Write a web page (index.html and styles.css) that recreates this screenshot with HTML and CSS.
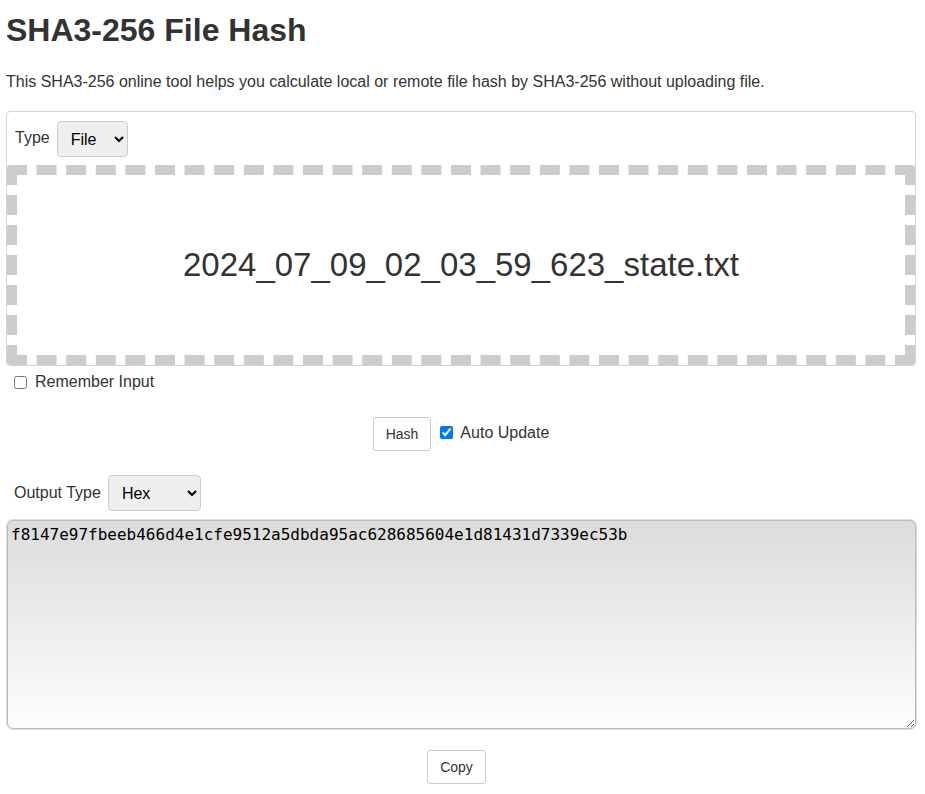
FILE: index.html
```html
<!DOCTYPE html>
<html>
<head>
<meta charset="utf-8">
<link rel="stylesheet" href="styles.css">
</head>
<body>
<div class="page">
  <h1 class="title">SHA3-256 File Hash</h1>
  <p class="desc">This SHA3-256 online tool helps you calculate local or remote file hash by SHA3-256 without uploading file.</p>
  <div class="panel">
    <div class="type-row">
      <label class="lbl">Type</label>
      <select class="sel sel-file"><option>File</option></select>
    </div>
    <div class="drop">2024_07_09_02_03_59_623_state.txt</div>
  </div>
  <div class="remember">
    <input type="checkbox" class="cb"><span>Remember Input</span>
  </div>
  <div class="actions">
    <button class="btn">Hash</button>
    <input type="checkbox" class="cb cb-auto" checked><span>Auto Update</span>
  </div>
  <div class="out-row">
    <label class="lbl">Output Type</label>
    <select class="sel sel-hex"><option>Hex</option></select>
  </div>
  <textarea class="output">f8147e97fbeeb466d4e1cfe9512a5dbda95ac628685604e1d81431d7339ec53b</textarea>
  <div class="copy-row">
    <button class="btn">Copy</button>
  </div>
</div>
</body>
</html>
```
FILE: styles.css
```css
html, body {
  margin: 0;
  padding: 0;
  background: #fff;
}
body {
  font-family: "Liberation Sans", Arial, sans-serif;
  color: #333;
  font-size: 16px;
}
.page {
  width: 910px;
  padding: 0 0 0 6px;
}
.title {
  font-size: 32px;
  font-weight: bold;
  margin: 0;
  padding-top: 11px;
  line-height: 38px;
}
.desc {
  margin: 23px 0 0 0;
  line-height: 20px;
}
.panel {
  margin-top: 19px;
  border: 1px solid #d3d3d3;
  border-radius: 4px;
  overflow: hidden;
}
.type-row {
  display: flex;
  align-items: center;
  gap: 7px;
  padding: 9px 8px 8px 8px;
}
.type-row .lbl { margin-top: -2px; }
.lbl {
  font-size: 16px;
}
.sel {
  font-family: "Liberation Sans", Arial, sans-serif;
  font-size: 16px;
  color: #000;
  height: 36px;
  background: #efefef;
  border: 1px solid #ccc;
  border-radius: 4px;
  padding: 0 6px 0 9px;
}
.sel-file { width: 71px; }
.sel-hex { width: 93px; }
.drop {
  height: 180px;
  border: 10px dashed #ccc;
  border-radius: 4px;
  display: flex;
  align-items: center;
  justify-content: center;
  font-size: 33px;
  color: #333;
}
.remember {
  display: flex;
  align-items: center;
  gap: 8px;
  margin-top: 7px;
  padding-left: 8px;
  height: 18px;
}
.cb {
  width: 13px;
  height: 13px;
  margin: 0;
}
.actions {
  display: flex;
  align-items: center;
  justify-content: center;
  margin-top: 26px;
  height: 34px;
}
.actions .btn { margin-right: 9px; }
.actions .cb { margin-right: 7px; margin-top: -4px; }
.actions span { margin-top: -3px; }
.btn {
  font-family: "Liberation Sans", Arial, sans-serif;
  font-size: 14px;
  color: #333;
  background: #fff;
  border: 1px solid #ccc;
  border-radius: 3px;
  height: 34px;
  padding: 0 12px;
}
.out-row {
  display: flex;
  align-items: center;
  gap: 7px;
  margin-top: 24px;
  padding-left: 8px;
}
.output {
  display: block;
  box-sizing: border-box;
  width: 909px;
  height: 209px;
  margin: 9px 0 0 1px;
  border: 1px solid #bbb;
  border-radius: 6px;
  box-shadow: 0 0 0 1px #ddd;
  background: linear-gradient(to bottom, #dcdcdc, #fdfdfd);
  font-family: "DejaVu Sans Mono", monospace;
  font-size: 16px;
  line-height: 19px;
  color: #000;
  padding: 4px 4px 4px 3px;
  resize: both;
}
.copy-row {
  display: flex;
  justify-content: center;
  margin-top: 21px;
  padding-right: 9px;
}
```
